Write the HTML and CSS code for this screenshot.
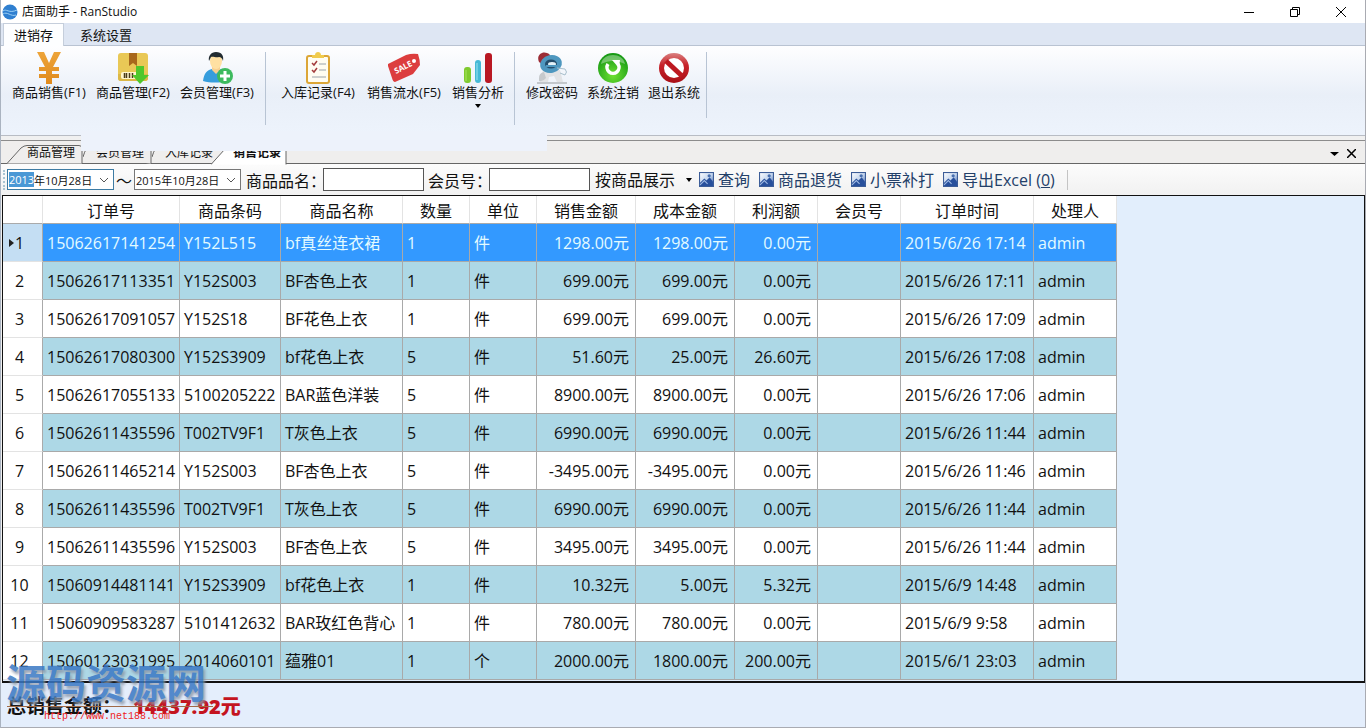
FILE: index.html
```html
<!DOCTYPE html>
<html lang="zh-CN">
<head>
<meta charset="utf-8">
<title>店面助手 - RanStudio</title>
<link rel="stylesheet" href="styles.css">
</head>
<body>
<svg class="defs" aria-hidden="true">
  <defs>
    <linearGradient id="pic" x1="0" y1="0" x2="1" y2="1"><stop offset="0" stop-color="#fff"/><stop offset=".5" stop-color="#c5d6ee"/><stop offset="1" stop-color="#3b62ac"/></linearGradient>
    <linearGradient id="yen" x1="0" y1="0" x2="0" y2="1"><stop offset="0" stop-color="#eda43a"/><stop offset="1" stop-color="#e08a1c"/></linearGradient>
    <radialGradient id="green" cx=".5" cy=".75" r=".7"><stop offset="0" stop-color="#6ee033"/><stop offset="1" stop-color="#179a14"/></radialGradient>
    <linearGradient id="red" x1="0" y1="0" x2="0" y2="1"><stop offset="0" stop-color="#d98080"/><stop offset=".4" stop-color="#c8232a"/><stop offset="1" stop-color="#a80f16"/></linearGradient>
    <symbol id="picture" viewBox="0 0 14 14">
      <rect x=".5" y=".5" width="13" height="13" fill="url(#pic)" stroke="#3c5d98"/>
      <path d="M1 10 5 6l2 2 3-3 3 4v4H1z" fill="#28509c"/><path d="M1 12 5 8l3 3" fill="none" stroke="#9fb9e2"/><circle cx="9.500" cy="3.500" r="1.500" fill="#486fae"/>
    </symbol>
  </defs>
</svg>
<div class="app">
  <header class="titlebar">
    <svg class="logo" viewBox="0 0 16 16"><circle cx="8" cy="8" r="7.500" fill="#2f7fd0"/><path d="M1 7c3-3 6 3 14-1M1 10c4-3 8 3 13 1" fill="none" stroke="#9cd0f5"/></svg>
    <h1>店面助手 - RanStudio</h1>
    <div class="window-buttons">
      <button aria-label="最小化"><svg viewBox="0 0 12 12"><path d="M1 6.500h10" /></svg></button>
      <button aria-label="还原"><svg viewBox="0 0 12 12"><path d="M1.500 3.500h7v7h-7zM3.500 3.500v-2h7v7h-2"/></svg></button>
      <button aria-label="关闭"><svg viewBox="0 0 12 12"><path d="M1 1l10 10M11 1 1 11"/></svg></button>
    </div>
  </header>
  <nav class="menu"><button class="menu-tab active">进销存</button><button class="menu-tab">系统设置</button></nav>

  <section class="ribbon">
    <div class="group">
      <button class="tool key"><svg viewBox="0 0 32 32"><path d="M4 0h7l5 11 5-11h7l-8 15h6v4h-7v3h7v4h-7v6h-6v-6H6v-4h7v-3H6v-4h6z" fill="url(#yen)"/></svg><span>商品销售(F1)</span></button>
      <button class="tool key"><svg viewBox="0 0 32 32"><rect x="1" y="1" width="30" height="28" rx="3" fill="#e9c856"/><path d="M1 22h30v4a3 3 0 0 1-3 3H4a3 3 0 0 1-3-3z" fill="#dcb846"/><path d="M12 1h8v13l-4-3-4 3z" fill="#a8681c"/><rect x="4" y="20" width="18" height="7" rx="2" fill="#fff5cc"/><path d="M7.500 21v5m2-5v5m3-5v5m3-5v5" stroke="#4a3a18" stroke-width="1.500"/><path d="M19 14h8v9h5l-9 9-8-9h4z" fill="#4fc72c"/></svg><span>商品管理(F2)</span></button>
      <button class="tool key"><svg viewBox="0 0 32 32"><path d="M2 29c1-8 4-11 9-12l4 2 4-2c5 2 6 6 7 12-7 2-17 2-24 0z" fill="#369ddd"/><path d="M11 15h8v3l-4 4-4-4z" fill="#f7cf91"/><ellipse cx="15" cy="9" rx="6" ry="8" fill="#ffe0a2"/><path d="M8 9C7 4 10 0 15 0c6 0 8 4 7 9-1-3-2-4-4-4-3 1-6-1-8 0z" fill="#222b31"/><circle cx="24" cy="24" r="8" fill="#3dba5e"/><path d="M24 19v10m-5-5h10" stroke="#fff" stroke-width="3"/></svg><span>会员管理(F3)</span></button>
    </div>
    <div class="group wide">
      <button class="tool key"><svg viewBox="0 0 32 32"><rect x="5" y="4" width="22" height="27" rx="2" fill="#fffdf2" stroke="#dca637" stroke-width="2"/><path d="M10 6V3h3c0-4 6-4 6 0h3v3z" fill="#f0cb4d"/><path d="M10 11l2 2 3-4m-5 9 2 2 3-4" fill="none" stroke="#a33c3c" stroke-width="1.500"/><path d="M17 12h7M17 18h7M10 25h14" stroke="#9aa3aa"/></svg><span>入库记录(F4)</span></button>
      <button class="tool key"><svg viewBox="0 0 32 32"><path d="M0 12 18 3q6-2 12-1 2 6 2 11l-7 9L7 30q-2 0-3-4L0 14z" fill="#dc3d3e"/><circle cx="26" cy="9" r="2" fill="#fff"/><text class="sale" x="8" y="22" transform="rotate(-27 8 22)">SALE</text></svg><span>销售流水(F5)</span></button>
      <button class="tool"><svg viewBox="0 0 32 32"><rect x="2" y="15" width="7" height="16" rx="3" fill="#7fca2f"/><rect x="13" y="8" width="6" height="23" rx="3" fill="#45b9d6"/><rect x="23" y="1" width="7" height="30" rx="3" fill="#b91823"/><path d="M4 18v11" stroke="#a8e560"/><path d="M15 11v17" stroke="#9ce3f0"/></svg><span>销售分析</span><svg class="caret" viewBox="0 0 6 4"><path d="M0 0h6L3 4z"/></svg></button>
    </div>
    <div class="group tight">
      <button class="tool"><svg viewBox="0 0 32 32"><path d="M1 31h30" stroke="#b4b8bd" stroke-width="1.500"/><path d="M7 18h17l3 12h-6l-3-6-5 1-1 5H4z" fill="#e2e3e5"/><path d="M3 26q0-5 5-6l2 6q-3 4-7 3z" fill="#c6c9cc"/><path d="M3 10C0 3 6-1 11 1q4 1 4 6l-8 6z" fill="#9c2c35"/><ellipse cx="15" cy="12" rx="11" ry="9" fill="#4e97bf" transform="rotate(-12 15 12)"/><ellipse cx="15" cy="12" rx="6" ry="4.500" fill="#244d6b"/><ellipse cx="16" cy="12" rx="4" ry="2" fill="#e4f2f8"/><path d="M10 14h12" stroke="#4e97bf" stroke-width="2"/><path d="M21 16l8 1q3 3 0 6l-5-2" fill="none" stroke="#a8bfcc"/></svg><span>修改密码</span></button>
      <button class="tool"><svg viewBox="0 0 32 32"><circle cx="16" cy="16" r="15" fill="url(#green)"/><path d="M4 12C6 0 26 0 28 12 20 8 12 8 4 12z" fill="#fff" opacity=".35"/><path d="M11 12a6 6 0 1 0 10 0" fill="none" stroke="#fff" stroke-width="3.500"/><path d="M15 8h8l-1 8z" fill="#fff"/></svg><span>系统注销</span></button>
      <button class="tool"><svg viewBox="0 0 32 32"><circle cx="16" cy="16" r="15" fill="url(#red)"/><circle cx="16" cy="16" r="10" fill="#fff"/><path d="M8 9 24 24" stroke="#bd1920" stroke-width="5"/></svg><span>退出系统</span></button>
    </div>
  </section>

  <div class="doc-tabs">
    <button class="doc-tab first"><svg viewBox="0 0 76 19"><path d="M0 18.500 14 3q3-2.500 6-2.500h52q3 0 3 3v15"/></svg><span>商品管理</span></button>
    <button class="doc-tab"><svg viewBox="0 0 69 19"><path d="M0 12q3-11 8-11h57q3 0 3 3v14.500"/></svg><span>会员管理</span></button>
    <button class="doc-tab"><svg viewBox="0 0 69 19"><path d="M0 12q3-11 8-11h57q3 0 3 3"/></svg><span>入库记录</span></button>
    <button class="doc-tab current"><svg viewBox="0 0 76 19"><path d="M0 18.500 14 3q3-2.500 6-2.500h52q3 0 3 3v15"/></svg><span>销售记录</span></button>
    <div class="doc-actions">
      <button aria-label="标签列表"><svg viewBox="0 0 9 9"><path d="M0 3h9L4.500 7z" fill="#000"/></svg></button>
      <button aria-label="关闭标签"><svg viewBox="0 0 9 9"><path d="M0 0l9 9M9 0 0 9" stroke="#000" stroke-width="1.500"/></svg></button>
    </div>
    <div class="smudge"></div>
  </div>

  <form class="toolbar">
    <i class="grip"></i>
    <div class="date focus"><input class="year" aria-label="开始年份" value="2013"><input aria-label="开始日期" value="年10月28日"><svg viewBox="0 0 10 6"><path d="M1 1l4 4 4-4"/></svg></div>
    <span class="tilde">～</span>
    <div class="date"><input aria-label="结束日期" value="2015年10月28日"><svg viewBox="0 0 10 6"><path d="M1 1l4 4 4-4"/></svg></div>
    <label for="product">商品品名：</label><input class="box" id="product" type="text">
    <label for="member">会员号：</label><input class="box" id="member" type="text">
    <div class="display"><select aria-label="展示方式"><option>按商品展示</option></select><svg class="caret" viewBox="0 0 6 4"><path d="M0 0h6L3 4z"/></svg></div>
    <div class="actions">
      <button type="button"><svg><use href="#picture"/></svg>查询</button>
      <button type="button"><svg><use href="#picture"/></svg>商品退货</button>
      <button type="button"><svg><use href="#picture"/></svg>小票补打</button>
      <button type="button"><svg><use href="#picture"/></svg><span>导出Excel (<u>0</u>)</span></button>
    </div>
  </form>

  <main class="grid">
    <table>
      <colgroup><col class="w40"><col class="w137"><col class="w101"><col class="w122"><col class="w67"><col class="w67"><col class="w99"><col class="w99"><col class="w83"><col class="w83"><col class="w133"><col class="w83"></colgroup>
      <thead><tr><th></th><th>订单号</th><th>商品条码</th><th>商品名称</th><th>数量</th><th>单位</th><th>销售金额</th><th>成本金额</th><th>利润额</th><th>会员号</th><th>订单时间</th><th>处理人</th></tr></thead>
      <tbody>
        <tr class="selected"><th><svg class="pointer" viewBox="0 0 5 8"><path d="M0 0l5 4-5 4z"/></svg>1</th><td>15062617141254</td><td>Y152L515</td><td>bf真丝连衣裙</td><td>1</td><td>件</td><td class="n">1298.00元</td><td class="n">1298.00元</td><td class="n">0.00元</td><td></td><td>2015/6/26 17:14</td><td>admin</td></tr>
        <tr><th>2</th><td>15062617113351</td><td>Y152S003</td><td>BF杏色上衣</td><td>1</td><td>件</td><td class="n">699.00元</td><td class="n">699.00元</td><td class="n">0.00元</td><td></td><td>2015/6/26 17:11</td><td>admin</td></tr>
        <tr><th>3</th><td>15062617091057</td><td>Y152S18</td><td>BF花色上衣</td><td>1</td><td>件</td><td class="n">699.00元</td><td class="n">699.00元</td><td class="n">0.00元</td><td></td><td>2015/6/26 17:09</td><td>admin</td></tr>
        <tr><th>4</th><td>15062617080300</td><td>Y152S3909</td><td>bf花色上衣</td><td>5</td><td>件</td><td class="n">51.60元</td><td class="n">25.00元</td><td class="n">26.60元</td><td></td><td>2015/6/26 17:08</td><td>admin</td></tr>
        <tr><th>5</th><td>15062617055133</td><td>5100205222</td><td>BAR蓝色洋装</td><td>5</td><td>件</td><td class="n">8900.00元</td><td class="n">8900.00元</td><td class="n">0.00元</td><td></td><td>2015/6/26 17:06</td><td>admin</td></tr>
        <tr><th>6</th><td>15062611435596</td><td>T002TV9F1</td><td>T灰色上衣</td><td>5</td><td>件</td><td class="n">6990.00元</td><td class="n">6990.00元</td><td class="n">0.00元</td><td></td><td>2015/6/26 11:44</td><td>admin</td></tr>
        <tr><th>7</th><td>15062611465214</td><td>Y152S003</td><td>BF杏色上衣</td><td>5</td><td>件</td><td class="n">-3495.00元</td><td class="n">-3495.00元</td><td class="n">0.00元</td><td></td><td>2015/6/26 11:46</td><td>admin</td></tr>
        <tr><th>8</th><td>15062611435596</td><td>T002TV9F1</td><td>T灰色上衣</td><td>5</td><td>件</td><td class="n">6990.00元</td><td class="n">6990.00元</td><td class="n">0.00元</td><td></td><td>2015/6/26 11:44</td><td>admin</td></tr>
        <tr><th>9</th><td>15062611435596</td><td>Y152S003</td><td>BF杏色上衣</td><td>5</td><td>件</td><td class="n">3495.00元</td><td class="n">3495.00元</td><td class="n">0.00元</td><td></td><td>2015/6/26 11:44</td><td>admin</td></tr>
        <tr><th>10</th><td>15060914481141</td><td>Y152S3909</td><td>bf花色上衣</td><td>1</td><td>件</td><td class="n">10.32元</td><td class="n">5.00元</td><td class="n">5.32元</td><td></td><td>2015/6/9 14:48</td><td>admin</td></tr>
        <tr><th>11</th><td>15060909583287</td><td>5101412632</td><td>BAR玫红色背心</td><td>1</td><td>件</td><td class="n">780.00元</td><td class="n">780.00元</td><td class="n">0.00元</td><td></td><td>2015/6/9 9:58</td><td>admin</td></tr>
        <tr><th>12</th><td>15060123031995</td><td>2014060101</td><td>蕴雅01</td><td>1</td><td>个</td><td class="n">2000.00元</td><td class="n">1800.00元</td><td class="n">200.00元</td><td></td><td>2015/6/1 23:03</td><td>admin</td></tr>
      </tbody>
    </table>
  </main>

  <footer class="status">
    <span>总销售金额：</span><strong>14437.92元</strong>
    <div class="watermark">源码资源网</div>
    <div class="rule"></div>
    <a class="site" href="http://www.net188.com">http://www.net188.com</a>
  </footer>
</div>
</body>
</html>
```
FILE: styles.css
```css
* { box-sizing: border-box; }
body { margin: 0; font-family: "Open Sans", "Noto Sans CJK SC", sans-serif; font-size: 13px; color: #111; }
button { font: inherit; color: inherit; background: none; border: 0; padding: 0; margin: 0; }
input, select { font: inherit; color: inherit; }
svg { display: block; flex: none; }
.defs { position: absolute; width: 0; height: 0; }
.app { min-height: 100vh; display: flex; flex-direction: column; background: #f0f0f0; border-left: 1px solid #aab3c0; border-right: 1px solid #a9abb2; }

.titlebar { display: flex; align-items: center; height: 23px; background: #fff; padding-left: 1px; }
.logo { width: 16px; height: 16px; }
.titlebar h1 { margin: 0 auto 0 4px; font-size: 12px; font-weight: 400; line-height: 20px; }
.window-buttons { display: flex; gap: 34px; padding-right: 18px; }
.window-buttons svg { width: 12px; height: 12px; fill: none; stroke: #000; }

.menu { display: flex; height: 23px; background: #dee6f3; border-bottom: 1px solid #b9c3d2; padding-left: 2px; }
.menu-tab { height: 23px; line-height: 22px; padding: 0 16px; }
.menu-tab.active { background: #fdfeff; border: 1px solid #c5cedb; border-bottom: 0; padding: 0 10px; }

.ribbon { display: flex; height: 90px; padding: 6px 0 0 10px; background: linear-gradient(#fefeff, #e9eff8 55%, #edf3fc); border-bottom: 1px solid #b8bcc4; }
.group { display: flex; gap: 8px; height: 73px; padding-right: 10px; margin-right: 14px; border-right: 1px solid #b8c4d4; }
.group.wide { margin-right: 11px; gap: 10px; }
.group.tight { height: 66px; gap: 9px; padding-right: 6px; }
.tool { display: flex; flex-direction: column; align-items: center; white-space: nowrap; }
.tool.key { width: 76px; }
.tool svg { width: 32px; height: 32px; }
.tool span { line-height: 16px; }
.tool .caret { width: 6px; height: 4px; margin-top: 4px; }
.sale { font: 700 8px "Open Sans", sans-serif; fill: #fff; }

.doc-tabs { position: relative; display: flex; height: 24px; margin-top: 4px; padding: 4px 0 0 7px; border-top: 1px solid #8c8c8c; border-bottom: 1px solid #666; background: #efeeed; font-size: 12px; }
.doc-tab { position: relative; height: 19px; display: flex; align-items: flex-start; justify-content: flex-end; width: 69px; padding-right: 8px; }
.doc-tab.first { width: 75px; }
.doc-tab.current { width: 66px; height: 20px; padding-right: 6px; font-weight: 700; }
.doc-tab svg { position: absolute; right: 0; bottom: 0; width: 69px; height: 19px; fill: #efeeed; stroke: #666; }
.doc-tab.first svg, .doc-tab.current svg { width: 76px; }
.doc-tab.current svg { fill: #fff; }
.doc-tab span { position: relative; line-height: 16px; }
.doc-actions { display: flex; align-items: center; gap: 8px; height: 16px; margin-left: auto; padding-right: 9px; }
.doc-actions svg { width: 9px; height: 9px; }
.smudge { position: absolute; left: 80px; top: -10px; width: 466px; height: 20px; background: #edf2fb; }

.toolbar { display: flex; align-items: center; height: 31px; padding-left: 2px; background: linear-gradient(#fcfcfc, #f1f1f1); font-size: 16px; white-space: nowrap; }
.toolbar > * { flex: none; }
.grip { width: 2px; height: 20px; margin-right: 2px; border-left: 2px dotted #aac4d2; }
.date { display: flex; align-items: center; width: 107px; height: 21px; border: 1px solid #777; background: #fff; font-size: 11px; padding: 0 4px 0 1px; }
.date.focus { border-color: #3d7ba3; }
.date input { border: 0; padding: 0; margin: 0; min-width: 0; flex: 1; height: 17px; background: transparent; }
.date .year { flex: none; width: 25px; height: 15px; background: #4a98d5; color: #fff; }
.date svg { width: 10px; height: 6px; fill: none; stroke: #555; }
.tilde { width: 20px; text-align: center; }
.toolbar label { width: 81px; padding-left: 5px; }
.toolbar label[for="member"] { width: 64px; padding-left: 4px; }
.box { width: 101px; height: 23px; margin: 0 0 0 1px; border: 1px solid #555; background: #fff; }
.display { display: flex; align-items: center; width: 97px; margin-left: 5px; }
.display select { appearance: none; width: 91px; border: 0; padding: 0; background: none; }
.caret { width: 6px; height: 4px; fill: #000; }
.actions { display: flex; gap: 9px; margin-left: 7px; padding-right: 12px; border-right: 1px solid #c4c4c4; color: #234069; }
.actions button { display: flex; align-items: center; gap: 4px; line-height: 20px; white-space: pre; }
.actions svg { width: 15px; height: 15px; }

.grid { flex: 1; margin-left: 1px; border: solid #111; border-width: 1px 1px 2px 1px; background: #e2eefc; }
table { table-layout: fixed; width: 1114px; border-collapse: separate; border-spacing: 0; font-size: 16px; }
th, td { font-weight: 400; padding: 0; white-space: nowrap; line-height: 22px; overflow: hidden; }
thead th { height: 28px; background: #fff; border-right: 1px solid #e3e3e3; border-bottom: 1px solid #aaa; text-align: center; padding-top: 2px; }
tbody th { position: relative; background: #fff; border-right: 1px solid #aaa; border-bottom: 1px solid #e3e3e3; text-align: center; padding-right: 6px; }
tbody td { height: 38px; padding: 0 6px 0 4px; background: #fff; border-right: 1px solid #a9a9a9; border-bottom: 1px solid #a9a9a9; }
tbody tr:nth-child(even) td { background: #add8e6; }
tbody .selected td { background: #3399ff; color: #e4fbff; }
tbody .selected th { background: #c4def3; }
.n { text-align: right; }
.pointer { position: absolute; left: 6px; top: 15px; width: 5px; height: 8px; fill: #222; }
.w40 { width: 40px; } .w67 { width: 67px; } .w83 { width: 83px; } .w99 { width: 99px; } .w101 { width: 101px; } .w122 { width: 122px; } .w133 { width: 133px; } .w137 { width: 137px; }

.status { position: relative; display: flex; align-items: center; height: 45px; padding-left: 6px; background: #e4eefc; border-bottom: 1px solid #a9abb2; font-size: 19px; font-weight: 700; }
.status span { width: 126px; white-space: nowrap; }
.status strong { font-size: 20px; color: #c41420; }
.watermark { position: absolute; left: 5px; bottom: 22px; font: 700 40px/48px "Noto Sans CJK SC", sans-serif; color: #3a78c4; opacity: .85; text-shadow: 2px 3px 3px #8a96a8; }
.rule { position: absolute; left: 6px; top: 23px; width: 206px; height: 1px; background: #a06a48; }
.site { position: absolute; left: 43px; top: 27px; font: 10px/14px "Liberation Mono", monospace; color: #ee2222; text-decoration: none; }
```
